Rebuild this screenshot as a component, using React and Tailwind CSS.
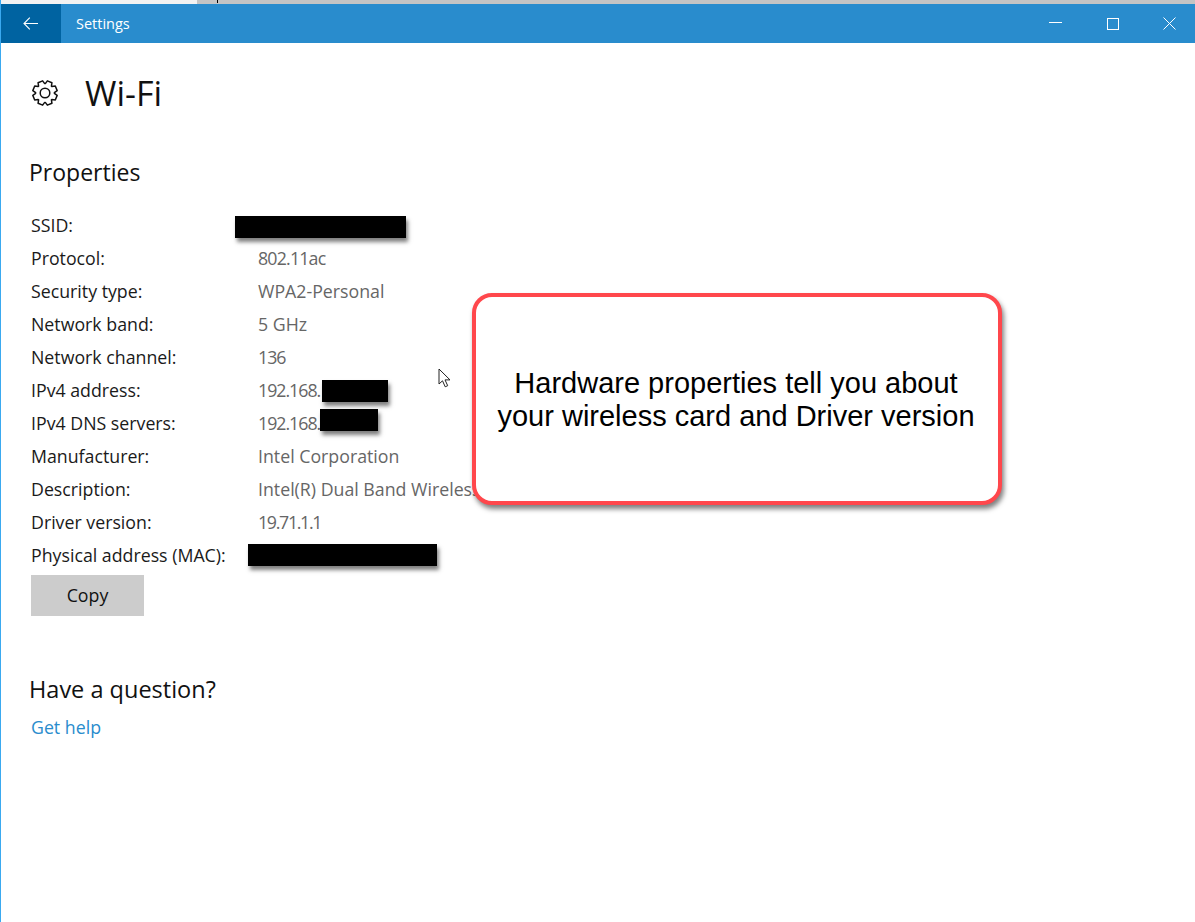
import React from 'react';

const font = { fontFamily: '"Open Sans", sans-serif' };

const rows = [
  { label: 'SSID:', value: '' },
  { label: 'Protocol:', value: '802.11ac', cls: 'tracking-[-0.8px]' },
  { label: 'Security type:', value: 'WPA2-Personal' },
  { label: 'Network band:', value: '5 GHz' },
  { label: 'Network channel:', value: '136', cls: 'tracking-[-1px]' },
  { label: 'IPv4 address:', value: '192.168.', cls: 'tracking-[-1px]' },
  { label: 'IPv4 DNS servers:', value: '192.168.', cls: 'tracking-[-1px]' },
  { label: 'Manufacturer:', value: 'Intel Corporation' },
  { label: 'Description:', value: 'Intel(R) Dual Band Wireless-AC 8260' },
  { label: 'Driver version:', value: '19.71.1.1', cls: 'tracking-[-1.3px]' },
  { label: 'Physical address (MAC):', value: '' },
];

const Redact = ({ className }) => (
  <div className={`absolute bg-black shadow-[2px_4px_4px_rgba(0,0,0,0.5)] ${className}`} />
);

// 8 tooth cog outline
const cogPath = () => {
  const pts = [];
  for (let i = 0; i < 8; i++) {
    const a = (i * Math.PI) / 4 + Math.PI / 8;
    const step = [
      [-0.36, 9.4],
      [-0.2, 12.4],
      [0.2, 12.4],
      [0.36, 9.4],
    ];
    step.forEach(([da, r]) => {
      pts.push(`${(13 + r * Math.cos(a + da)).toFixed(2)} ${(13 + r * Math.sin(a + da)).toFixed(2)}`);
    });
  }
  return `M${pts.join('L')}Z`;
};

const Gear = () => (
  <svg width="26" height="26" viewBox="0 0 26 26" fill="none" stroke="#111" strokeWidth="1.5" strokeLinejoin="round">
    <path d={cogPath()} />
    <circle cx="13" cy="13" r="4.8" />
  </svg>
);

export default function App() {
  return (
    <div className="relative h-[922px] w-[1195px] overflow-hidden bg-white border-l border-[#3aa9f0]" style={font}>
      {/* strip of the window behind */}
      <div className="flex h-[4px] -ml-px">
        <div className="w-[197px] bg-[#f2f2f2]" />
        <div className="flex-1 bg-[#c4c4c4]">
          <div className="ml-[20px] h-[3px] w-px bg-black" />
        </div>
      </div>

      {/* title bar */}
      <div className="flex h-[39px] items-stretch bg-[#298ccd] text-white">
        <div className="flex w-[60px] items-center justify-center bg-[#0063a1] pr-[2px]">
          <svg width="15" height="13" viewBox="0 0 15 13" fill="none" stroke="white" strokeWidth="1.1">
            <path d="M15 6.500H1M6.800.7 1 6.500l5.800 5.800" />
          </svg>
        </div>
        <div className="ml-[15px] flex items-center text-[14.5px]">Settings</div>
        <div className="ml-auto flex items-center">
          <svg width="13" height="1" className="mr-[45px] mb-[2px]" viewBox="0 0 13 1"><rect width="13" height="1" fill="white" /></svg>
          <div className="mr-[44px] h-[12px] w-[12px] border border-white" />
          <svg width="13" height="13" className="mr-[19px]" viewBox="0 0 13 13" stroke="white" strokeWidth="1"><path d="M.5.5l12 12M12.500.5l-12 12" /></svg>
        </div>
      </div>

      {/* header */}
      <div className="ml-[31px] mt-[28px] flex items-center gap-[27px]">
        <Gear />
        <h1 className="text-[34px] leading-[44px] text-[#111]">Wi-Fi</h1>
      </div>

      <h2 className="ml-[28px] mt-[42px] text-[23px] leading-[30px] text-[#111]">Properties</h2>

      <div className="ml-[30px] mt-[22px]">
        {rows.map((row) => (
          <div key={row.label} className="flex h-[33px] items-center text-[17.75px]">
            <div className="w-[227px] text-[#1a1a1a] whitespace-nowrap">{row.label}</div>
            <div className={`text-[#666666] whitespace-nowrap ${row.cls || ''}`}>{row.value}</div>
          </div>
        ))}
        <button className="mt-[3px] block h-[41px] w-[113px] bg-[#cccccc] text-[17.75px] text-[#111]">Copy</button>
      </div>

      <h2 className="ml-[28px] mt-[58px] text-[23.5px] leading-[30px] text-[#111]">Have a question?</h2>
      <a className="ml-[30px] mt-[11px] block text-[17.75px] leading-[24px] text-[#298ccd]">Get help</a>

      {/* annotations over the screenshot */}
      <Redact className="left-[234px] top-[216px] h-[22px] w-[171px]" />
      <Redact className="left-[321px] top-[380px] h-[22px] w-[66px]" />
      <Redact className="left-[319px] top-[409px] h-[22px] w-[58px]" />
      <Redact className="left-[247px] top-[544px] h-[22px] w-[189px]" />

      <svg className="absolute left-[437px] top-[368px]" width="14" height="21" viewBox="0 0 14 21" fill="white" stroke="#222" strokeWidth="1">
        <path d="M1 1v15l3.500-3.200 2.700 6 2.500-1.100-2.700-5.800h5z" />
      </svg>

      <div
        className="absolute left-[471px] top-[293px] flex h-[212px] w-[530px] items-center justify-center rounded-[20px] border-[4px] border-[#ff474c] bg-white pt-[1px] pr-[2px] shadow-[2px_4px_5px_rgba(0,0,0,0.5)] text-center text-[29px] leading-[33px] text-black"
        style={{ fontFamily: '"Liberation Sans", sans-serif' }}
      >
        <p>Hardware properties tell you about<br />your wireless card and Driver version</p>
      </div>
    </div>
  );
}
